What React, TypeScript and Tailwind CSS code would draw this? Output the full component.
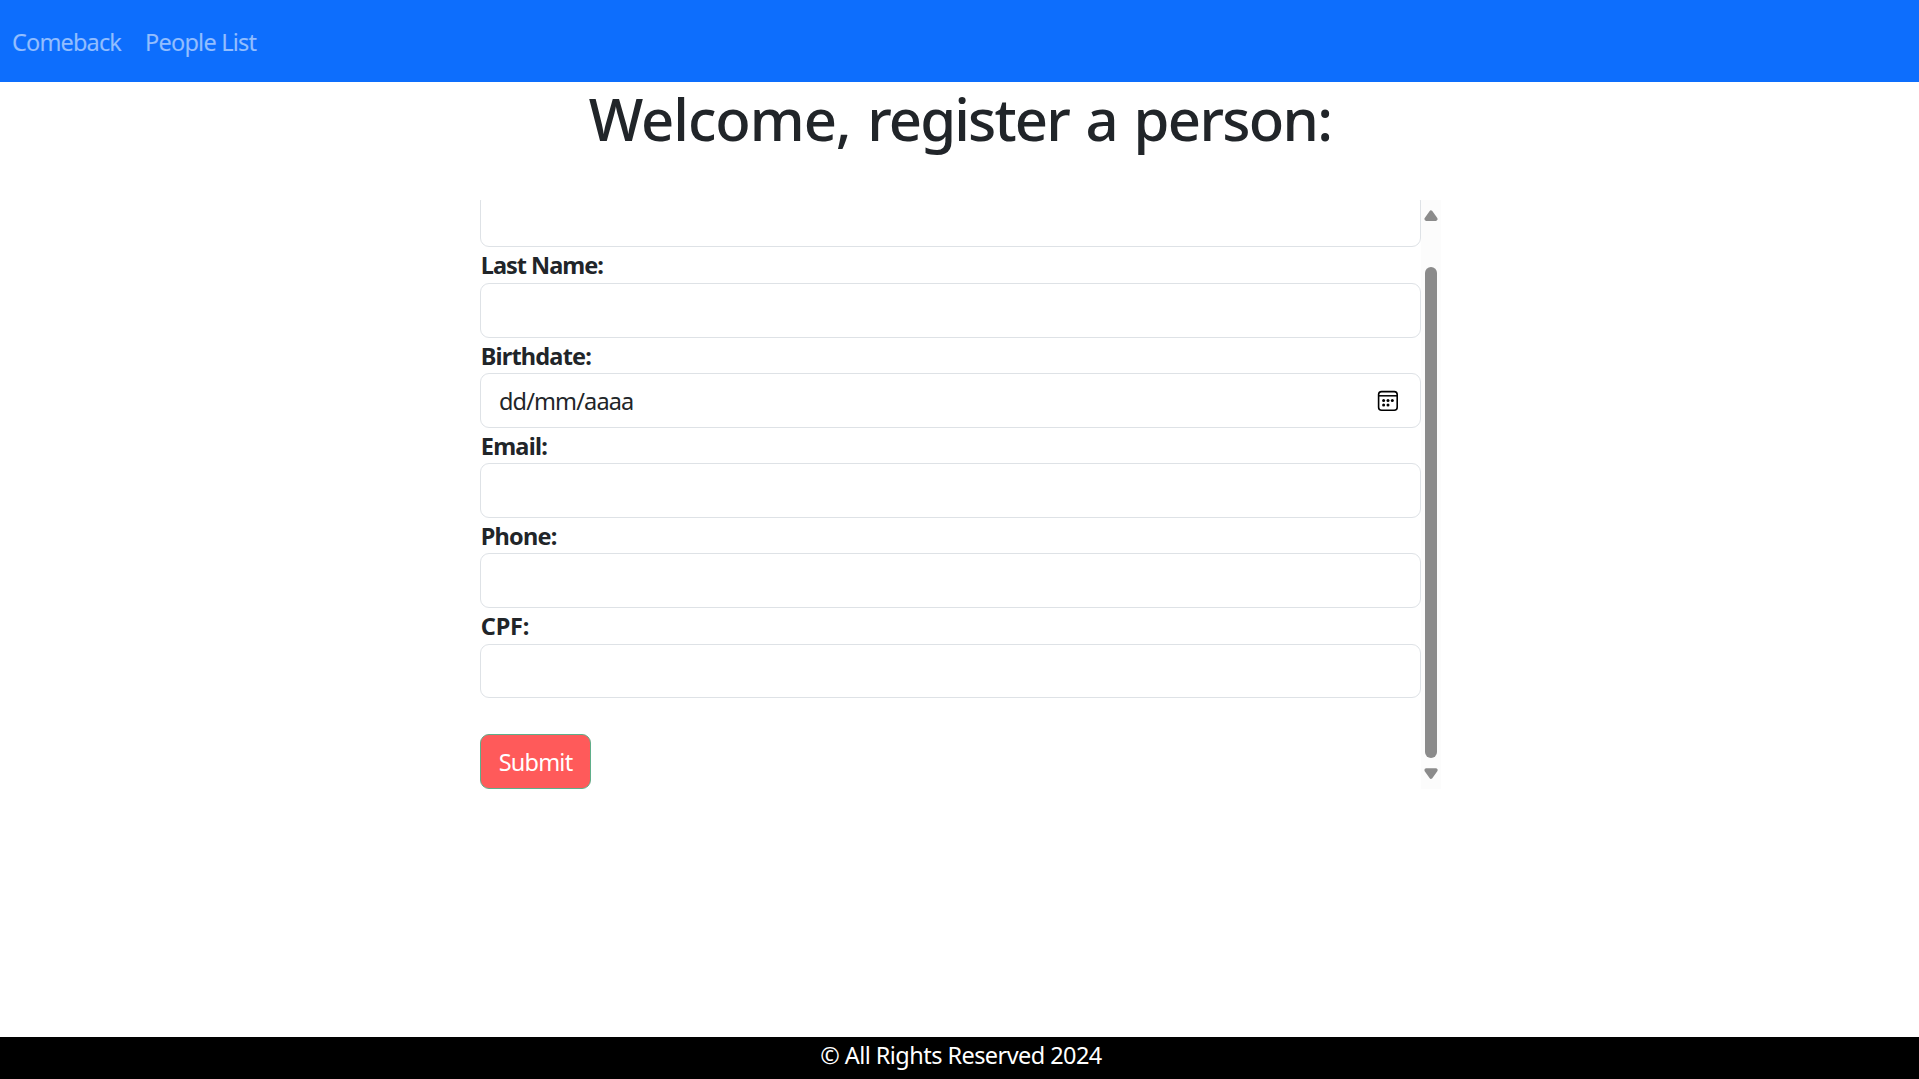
const inputClass =
  'block w-full shrink-0 rounded-[9px] border border-[#dee2e6] bg-white px-[18px] text-[23.5px] text-[#212529] outline-none';

function Label({ text, className }: { text: string; className: string }) {
  return (
    <label className={`block shrink-0 whitespace-nowrap pl-[0.75px] text-[23.5px] leading-9 font-bold ${className}`}>
      {text}
    </label>
  );
}

function CalendarIcon() {
  return (
    <svg className="mt-4 h-[22px] w-[22px]" viewBox="0 0 22 22" fill="none">
      <rect x="1.6" y="1.6" width="18.6" height="18.6" rx="3" stroke="#000" strokeWidth="1.6" />
      <path d="M1.6 5.8H20.2" stroke="#000" strokeWidth="1.5" />
      <g fill="#000">
        <circle cx="6.6" cy="10.6" r="1.5" />
        <circle cx="11" cy="10.6" r="1.5" />
        <circle cx="15.3" cy="10.6" r="1.5" />
        <circle cx="6.6" cy="14.9" r="1.5" />
        <circle cx="11" cy="14.9" r="1.5" />
      </g>
    </svg>
  );
}

function Scrollbar() {
  return (
    <div className="flex h-full w-5 flex-col items-center bg-[#fcfcfc]">
      <svg className="mt-[9px] h-3 w-4 shrink-0" viewBox="0 0 16 12">
        <path d="M8 3.2L12.8 10.1H3.2Z" fill="#8b8b8b" stroke="#8b8b8b" strokeWidth="3.6" strokeLinejoin="round" />
      </svg>
      <div className="mt-[46px] h-[491px] w-3 shrink-0 rounded-full bg-[#8b8b8b]" />
      <svg className="mt-[9px] h-3 w-4 shrink-0" viewBox="0 0 16 12">
        <path d="M8 10L12.8 3.1H3.2Z" fill="#8b8b8b" stroke="#8b8b8b" strokeWidth="3.6" strokeLinejoin="round" />
      </svg>
    </div>
  );
}

export default function App() {
  return (
    <div className="flex h-[1079px] w-full flex-col overflow-hidden bg-white font-['Noto_Sans',sans-serif] text-[#212529]">
      <nav className="flex h-[82px] shrink-0 gap-6 bg-[#0d6efd] pt-6 pl-3 text-[23.5px] leading-9 whitespace-nowrap text-white/55">
        <a className="w-[109px] tracking-[-0.84px]">Comeback</a>
        <a className="tracking-[-0.76px]">People List</a>
      </nav>

      <h1 className="h-[72px] shrink-0 pt-px pl-px text-center text-[58px] leading-[72px] font-medium tracking-[-1.55px] whitespace-nowrap [word-spacing:3px]">
        <span className="tracking-[-1.05px]">Welcome,</span> <span className="tracking-[-1.85px]">register</span> a{' '}
        <span className="tracking-[-1.7px]">person:</span>
      </h1>

      <main className="mt-[46px] ml-[480px] flex h-[589px] w-[961px] shrink-0">
        <form className="flex h-full w-[941px] flex-col justify-end overflow-hidden">
          <input className={`${inputClass} h-[55px]`} />
          <Label text="Last Name:" className="h-9 tracking-[-0.994px]" />
          <input className={`${inputClass} h-[55px]`} />
          <Label text="Birthdate:" className="h-[35px] tracking-[-0.81px]" />
          <div className={`${inputClass} h-[55px]`}>
            <div className="flex justify-between pr-[3px]">
              <span className="pt-[9px] leading-9 tracking-[-0.876px]">dd/mm/aaaa</span>
              <CalendarIcon />
            </div>
          </div>
          <Label text="Email:" className="h-[35px] tracking-[-0.736px]" />
          <input className={`${inputClass} h-[55px]`} />
          <Label text="Phone:" className="h-[35px] tracking-[-0.772px]" />
          <input className={`${inputClass} h-[55px]`} />
          <Label text="CPF:" className="h-9 tracking-[-0.194px]" />
          <input className={`${inputClass} h-[54px]`} />
          <button
            type="button"
            className="mt-9 h-[55px] w-[111px] shrink-0 rounded-[9px] border border-[#5fae8a] bg-[#ff5a5a] text-[23.5px] leading-9 tracking-[-0.782px] text-white"
          >
            Submit
          </button>
        </form>
        <Scrollbar />
      </main>

      <footer className="mt-auto h-[42px] shrink-0 bg-black pl-[3px] text-center text-[23.5px] leading-9 tracking-[-0.56px] text-white">
        © All Rights Reserved 2024
      </footer>
    </div>
  );
}
